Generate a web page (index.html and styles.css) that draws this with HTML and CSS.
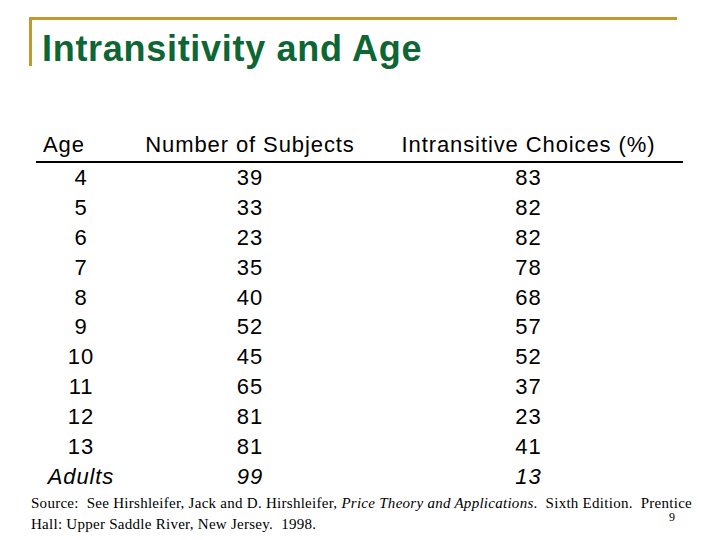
FILE: index.html
```html
<!DOCTYPE html>
<html>
<head>
<meta charset="utf-8">
<link rel="stylesheet" href="styles.css">
</head>
<body>
<div class="slide">
  <div class="title-bar">
    <h1 class="title">Intransitivity and Age</h1>
  </div>
  <div class="data">
    <div class="row head">
      <div class="c1 h-age">Age</div>
      <div class="c2">Number of Subjects</div>
      <div class="c3">Intransitive Choices (%)</div>
    </div>
    <div class="row"><div class="c1">4</div><div class="c2">39</div><div class="c3">83</div></div>
    <div class="row"><div class="c1">5</div><div class="c2">33</div><div class="c3">82</div></div>
    <div class="row"><div class="c1">6</div><div class="c2">23</div><div class="c3">82</div></div>
    <div class="row"><div class="c1">7</div><div class="c2">35</div><div class="c3">78</div></div>
    <div class="row"><div class="c1">8</div><div class="c2">40</div><div class="c3">68</div></div>
    <div class="row"><div class="c1">9</div><div class="c2">52</div><div class="c3">57</div></div>
    <div class="row"><div class="c1">10</div><div class="c2">45</div><div class="c3">52</div></div>
    <div class="row"><div class="c1">11</div><div class="c2">65</div><div class="c3">37</div></div>
    <div class="row"><div class="c1">12</div><div class="c2">81</div><div class="c3">23</div></div>
    <div class="row"><div class="c1">13</div><div class="c2">81</div><div class="c3">41</div></div>
    <div class="row adults"><div class="c1">Adults</div><div class="c2">99</div><div class="c3">13</div></div>
  </div>
  <p class="source">Source:&nbsp; See Hirshleifer, Jack and D. Hirshleifer, <em>Price Theory and Applications</em>.&nbsp; Sixth Edition.&nbsp; Prentice<br>Hall: Upper Saddle River, New Jersey.&nbsp; 1998.</p>
  <div class="page-num">9</div>
</div>
</body>
</html>
```
FILE: styles.css
```css
* { box-sizing: border-box; }
html, body {
  margin: 0;
  padding: 0;
  background: #ffffff;
}
.slide {
  position: relative;
  width: 720px;
  height: 540px;
  overflow: hidden;
  background: #ffffff;
}
.title-bar {
  margin: 17px 43px 0 29px;
  border-top: 3px solid #c09a2c;
  border-left: 3px solid #c09a2c;
  padding: 11px 0 0 10px;
  height: 49px;
}
.title {
  margin: 0;
  font-family: "Liberation Sans", Arial, sans-serif;
  font-weight: bold;
  font-size: 36px;
  line-height: 35px;
  letter-spacing: 0.7px;
  color: #0d6634;
  white-space: nowrap;
}
.data {
  margin: 64px 0 0 36px;
  width: 647px;
  font-family: "Liberation Sans", Arial, sans-serif;
  font-size: 22px;
  letter-spacing: 0.9px;
  color: #000000;
}
.row {
  display: grid;
  grid-template-columns: 90px 248px 309px;
  line-height: 29.9px;
  text-align: center;
  white-space: nowrap;
}
.row.head {
  padding-bottom: 1px;
  border-bottom: 2px solid #000000;
}
.h-age {
  text-align: left;
  padding-left: 7px;
}
.adults {
  font-style: italic;
}
.source {
  margin: 1px 0 0 31px;
  font-family: "Liberation Serif", "Times New Roman", serif;
  font-size: 15px;
  line-height: 21px;
  letter-spacing: 0.27px;
  color: #000000;
  white-space: nowrap;
}
.page-num {
  position: absolute;
  left: 669px;
  top: 513px;
  font-family: "Liberation Serif", "Times New Roman", serif;
  font-size: 12px;
  line-height: 9px;
  color: #000000;
}
```
